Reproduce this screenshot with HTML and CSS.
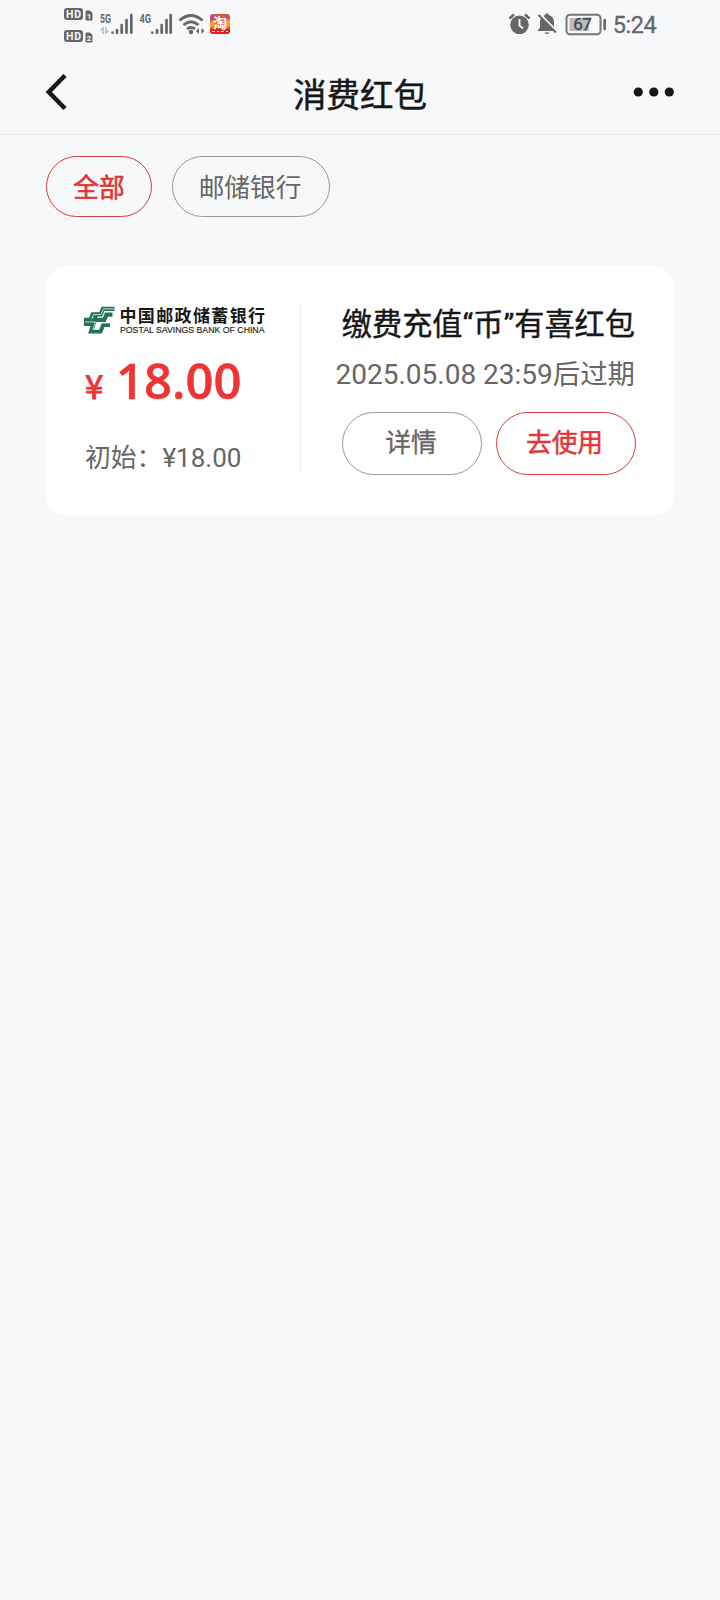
FILE: index.html
```html
<!DOCTYPE html>
<html lang="zh-CN">
<head>
<meta charset="utf-8">
<title>消费红包</title>
<link rel="stylesheet" href="styles.css">
</head>
<body>
<div class="status">
  <svg class="status-left" width="180" height="50" viewBox="55 0 180 50">
    <g fill="#666">
      <rect x="64" y="8" width="19" height="12" rx="3"/>
      <rect x="64" y="30" width="19" height="12" rx="3"/>
      <path d="M86 11h4l2 2v7h-6zM86 33h4l2 2v7h-6z" stroke="#666"/>
    </g>
    <g class="hd">
      <text x="66" y="18" textLength="15">HD</text>
      <text x="66" y="40" textLength="15">HD</text>
      <text class="sim" x="86.7" y="18.5">1</text>
      <text class="sim" x="86.7" y="40.5">2</text>
    </g>
    <g class="net">
      <text x="100" y="22.5" textLength="11" lengthAdjust="spacingAndGlyphs">5G</text>
      <text x="139.5" y="22.5" textLength="11.5" lengthAdjust="spacingAndGlyphs">4G</text>
    </g>
    <path d="M103 34v-6l-2.500 2.500M106 27v6l2.500-2.500" fill="none" stroke="#bbb" stroke-width="1.500"/>
    <g stroke="#666" stroke-width="2.700" stroke-linecap="round">
      <path d="M112.500 32.500v.1M117 30v2.700M121.700 25v7.700M126.500 20v12.700M131.300 15v17.700"/>
      <path d="M152.300 32.500v.1M157 30v2.700M161.700 25v7.700M166.500 20v12.700M170.700 15v17.700"/>
    </g>
    <g fill="none" stroke="#666" stroke-width="2.800">
      <path d="M179.500 20.500q11.500-10 23 0M183.500 25q7.500-6.500 15 0M187 29q4-3 8 0"/>
    </g>
    <circle cx="191" cy="32" r="2.200" fill="#666"/>
    <path d="M199 28v6l-3-2.700zM201.500 34v-6l3 2.700z" fill="#666"/>
    <rect x="210" y="14" width="20" height="20" rx="3.500" fill="#ee5229"/>
    <path d="M210 25v-8q0-3 4-3h5l-6 12zM225 14q5 0 5 4v9l-5-3z" fill="#bc5575"/>
    <path d="M210 22l5-2v6l-5 2zM226 21l4-2v7l-5 2z" fill="#f9a12d"/>
    <path d="M210 29h20v2q0 3-3.500 3h-13q-3.500 0-3.500-3z" fill="#e71e18"/>
    <text class="app" x="213" y="27.500">淘</text>
    <path d="M212 31.500h3M217 31.500h2M221 31.500h3M226 31.500h2" stroke="#fff" stroke-width="1.200"/>
  </svg>
  <svg class="status-right" width="170" height="50" viewBox="500 0 170 50">
    <circle cx="519.500" cy="24.800" r="9.300" fill="#666"/>
    <path d="M519.500 19v6.500l3.500 3" fill="none" stroke="#f7f8fa" stroke-width="1.900"/>
    <path d="M509.500 18.500l4.500-4M525 14.500l4.500 4" stroke="#666" stroke-width="2.500"/>
    <path d="M547 13.500c1.500 0 2 .8 2 1.800 3.500 1 5 4 5 7.200v5l2 3.500h-18.500l2.500-3.500v-5c0-3.200 1.500-6.200 5-7.200 0-1 .5-1.800 2-1.800z" fill="#666"/>
    <path d="M544.500 32.500h5q-.7 1.500-2.500 1.500t-2.500-1.500z" fill="#666"/>
    <path d="M540 14l17 17.500" stroke="#f7f8fa" stroke-width="2.200"/>
    <path d="M538.500 15l17.500 17.500" stroke="#666" stroke-width="2"/>
    <rect x="566.500" y="14.800" width="34" height="19.500" rx="3.500" fill="none" stroke="#777" stroke-width="2"/>
    <rect x="569.500" y="18" width="19.500" height="13" rx="1" fill="#bbb"/>
    <path d="M604.700 20v9" stroke="#666" stroke-width="2.500" stroke-linecap="round"/>
    <text class="battery" x="573.300" y="30.300" textLength="18.500">67</text>
    <text class="clock" x="612.700" y="33" textLength="44">5:24</text>
  </svg>
</div>
<header class="nav">
  <svg class="back" width="30" height="40" viewBox="0 0 30 40"><path d="M21 3.500L4.800 20 21 36.500" fill="none" stroke="#171717" stroke-width="4.600"/></svg>
  <h1 class="nav-title">消费红包</h1>
  <svg class="more" width="42" height="12" viewBox="0 0 42 12" fill="#171717"><circle cx="5.300" cy="6" r="4.600"/><circle cx="20.800" cy="6" r="4.600"/><circle cx="36.300" cy="6" r="4.600"/></svg>
</header>
<nav class="chips">
  <button class="chip chip-active">全部</button>
  <button class="chip chip-bank">邮储银行</button>
</nav>
<main class="card">
  <section class="value">
    <svg class="logo" width="190" height="34" viewBox="80 303.300 190 34">
      <g fill="none" stroke="#237455" stroke-width="4.200">
        <path d="M114.500 308.200h-11.500l-2.300 5.500h-8l-2.200 5.300"/>
        <path d="M112.500 314h-6l-2.200 5.200h-20.300"/>
        <path d="M84 323.300h9.500l-2.500 7.500h9.500l2.500-6.500h7"/>
        <path d="M97 312l-4.500 16" stroke-width="3"/>
      </g>
      <path d="M114 308.200h-10.500l-2.500 5.700h-7.500l-2 4.500M85 321.300h10.500l-2.500 7.500h6l2.300-6.500h9" fill="none" stroke="#d5e8df" stroke-width=".9"/>
      <text class="bank-cn" x="119.500" y="321.500" textLength="145.500">中国邮政储蓄银行</text>
      <text class="bank-en" x="120" y="332" textLength="144.500" lengthAdjust="spacingAndGlyphs">POSTAL SAVINGS BANK OF CHINA</text>
    </svg>
    <div class="amount"><span class="yen">¥</span><span class="num">18.00</span></div>
    <div class="initial">初始：<span class="initial-num">¥18.00</span></div>
  </section>
  <section class="info">
    <h2 class="info-title">缴费充值<span class="quote">“</span>币<span class="quote">”</span>有喜红包</h2>
    <p class="expiry">2025.05.08 23:59<span class="expiry-cn">后过期</span></p>
    <div class="actions">
      <button class="action">详情</button>
      <button class="action action-use">去使用</button>
    </div>
  </section>
</main>
</body>
</html>
```
FILE: styles.css
```css
* { box-sizing: border-box; }
body {
  margin: 0;
  min-height: 1600px;
  background: #f7f8fa;
  color: #171717;
  font-family: Roboto, "Noto Sans CJK SC", sans-serif;
}
h1, h2, p { margin: 0; font-weight: 400; }
svg { display: block; }
button {
  font-family: "Noto Sans CJK SC", sans-serif;
  padding: 0;
  background: none;
  white-space: nowrap;
}
.status { height: 50px; display: flex; justify-content: space-between; padding: 0 50px 0 55px; }
.hd text { font: 700 10.5px Roboto, sans-serif; fill: #f7f8fa; }
.hd .sim { font-size: 8px; }
.net text { font: 700 12px Roboto, sans-serif; fill: #666; }
.app { font: 700 14px "Noto Sans CJK SC", sans-serif; fill: #fff; }
.battery { font: 400 17px Roboto, sans-serif; fill: #444; stroke: #444; stroke-width: .3px; }
.clock { font: 400 23.5px Roboto, sans-serif; fill: #666; stroke: #666; stroke-width: .3px; }
.nav {
  height: 85px;
  display: grid;
  grid-template-columns: 150px 1fr 150px;
  align-items: center;
  padding: 0 45px 1px 44px;
  border-bottom: 1px solid #ebecee;
}
.nav-title {
  font: 400 33.5px/44px "Noto Sans CJK SC", sans-serif;
  text-align: center;
  padding-top: 2px;
  padding-left: 1px;
  -webkit-text-stroke: .5px;
}
.more { justify-self: end; }
.chips { display: flex; gap: 20px; padding: 21px 46px 0; }
.chip {
  width: 106px;
  height: 61px;
  border: 1px solid #999;
  border-radius: 31px;
  font-size: 25.7px;
  line-height: 36px;
  padding-bottom: 2px;
  color: #666;
}
.chip-active { border-color: #d43d3d; color: #e23535; -webkit-text-stroke: .6px; }
.chip-bank { width: 158px; padding-right: 2px; }
.card {
  margin: 49px 46px 0;
  height: 250px;
  display: flex;
  background: #fff;
  border-radius: 22px;
  padding: 38px 38px 42px 34px;
}
.value { width: 221px; height: 169px; border-right: 1px solid #f0f0f0; }
.amount {
  display: flex;
  align-items: baseline;
  gap: 9px;
  height: 60px;
  padding: 12px 0 0 5px;
  color: #ee3434;
  line-height: 60px;
}
.yen { width: 22px; font-family: "Noto Sans CJK SC", sans-serif; font-size: 33px; -webkit-text-stroke: .9px; }
.num { font-family: "Open Sans", sans-serif; font-size: 49px; font-weight: 600; -webkit-text-stroke: .5px; }
.initial { display: flex; padding: 41px 0 0 5px; font-size: 25.8px; line-height: 38px; color: #666; }
.initial-num { font-size: 26px; }
.bank-cn { font: 700 17px "Noto Sans CJK SC", sans-serif; fill: #171717; }
.bank-en { font: 400 8.3px "Liberation Sans", sans-serif; fill: #222; stroke: #222; stroke-width: .15px; }
.info { flex: 1; display: flex; flex-direction: column; align-items: flex-end; white-space: nowrap; }
.info-title {
  height: 38px;
  font: 400 30.2px/36px "Noto Sans CJK SC", sans-serif;
  -webkit-text-stroke: .4px;
  margin-right: 1px;
}
.quote { font-family: Roboto, sans-serif; }
.expiry { height: 40px; font-size: 28px; line-height: 40px; margin: 13px 1px 0 0; color: #666; }
.expiry-cn { font-size: 27.4px; }
.actions { display: flex; gap: 14px; margin-top: 17px; }
.action {
  width: 140px;
  height: 63px;
  border: 1px solid #999;
  border-radius: 32px;
  font-size: 25.7px;
  line-height: 36px;
  padding: 0 2px 5px 0;
  color: #666;
  -webkit-text-stroke: .3px;
}
.action-use { border-color: #d43d3d; color: #e23535; padding-right: 3px; -webkit-text-stroke: .5px; }
```
